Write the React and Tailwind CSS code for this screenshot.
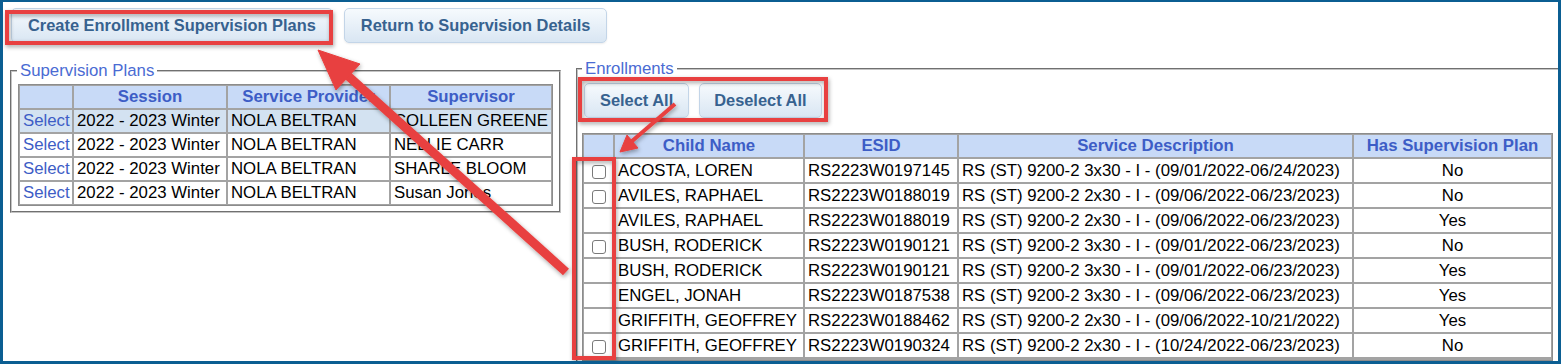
import React from "react";

const font = { fontFamily: '"Liberation Sans", Arial, sans-serif' };

const plans = [
  { session: "2022 - 2023 Winter", provider: "NOLA BELTRAN", supervisor: "COLLEEN GREENE", selected: true },
  { session: "2022 - 2023 Winter", provider: "NOLA BELTRAN", supervisor: "NELLIE CARR" },
  { session: "2022 - 2023 Winter", provider: "NOLA BELTRAN", supervisor: "SHARLE BLOOM" },
  { session: "2022 - 2023 Winter", provider: "NOLA BELTRAN", supervisor: "Susan Jones" },
];

const enrollments = [
  { name: "ACOSTA, LOREN", esid: "RS2223W0197145", desc: "RS (ST) 9200-2 3x30 - I - (09/01/2022-06/24/2023)", has: "No" },
  { name: "AVILES, RAPHAEL", esid: "RS2223W0188019", desc: "RS (ST) 9200-2 2x30 - I - (09/06/2022-06/23/2023)", has: "No" },
  { name: "AVILES, RAPHAEL", esid: "RS2223W0188019", desc: "RS (ST) 9200-2 2x30 - I - (09/06/2022-06/23/2023)", has: "Yes" },
  { name: "BUSH, RODERICK", esid: "RS2223W0190121", desc: "RS (ST) 9200-2 3x30 - I - (09/01/2022-06/23/2023)", has: "No" },
  { name: "BUSH, RODERICK", esid: "RS2223W0190121", desc: "RS (ST) 9200-2 3x30 - I - (09/01/2022-06/23/2023)", has: "Yes" },
  { name: "ENGEL, JONAH", esid: "RS2223W0187538", desc: "RS (ST) 9200-2 3x30 - I - (09/06/2022-06/23/2023)", has: "Yes" },
  { name: "GRIFFITH, GEOFFREY", esid: "RS2223W0188462", desc: "RS (ST) 9200-2 2x30 - I - (09/06/2022-10/21/2022)", has: "Yes" },
  { name: "GRIFFITH, GEOFFREY", esid: "RS2223W0190324", desc: "RS (ST) 9200-2 2x30 - I - (10/24/2022-06/23/2023)", has: "No" },
];

const btn =
  "h-[35px] rounded-[5px] border border-[#c3d5e8] bg-linear-to-b from-[#f6fafd] to-[#d9e6f3] text-[16.4px] font-bold text-[#37628f] shadow-[0_1px_2px_rgba(0,0,0,0.08)]";

const th = "border border-[#a3a3a3] bg-[#c8daf7] px-[3px] leading-[22px] text-center font-bold text-[#3d5dc6]";
const td = "border border-[#a3a3a3] px-[3px] whitespace-nowrap";

function Checkbox() {
  return <span className="inline-block h-[14px] w-[14px] rounded-[3px] border border-[#7a7a7a] bg-white align-middle" />;
}

// red callouts laid over the page, in page pixels
function Annotations() {
  return (
    <svg
      className="pointer-events-none absolute -left-[3px] -top-[2px] h-[364px] w-[1561px]"
      viewBox="0 0 1561 364"
    >
      <defs>
        <filter id="sh" x="-20%" y="-20%" width="140%" height="140%">
          <feDropShadow dx="1" dy="2" stdDeviation="2" floodColor="#000" floodOpacity="0.35" />
        </filter>
      </defs>
      <g filter="url(#sh)" fill="none" stroke="#e8403f" strokeWidth="4">
        <rect x="7" y="12" width="324" height="31" />
        <rect x="580" y="79" width="246" height="41" />
        <rect x="574" y="159" width="40" height="199" />
      </g>
      <g filter="url(#sh)" fill="#e8403f" stroke="#e8403f">
        <line x1="566" y1="272" x2="347" y2="75" strokeWidth="9" />
        <polygon points="318,50 360,64 336,90" strokeWidth="1" />
        <line x1="675" y1="104" x2="631" y2="142" strokeWidth="4" />
        <polygon points="620,152 638,148 627,135" strokeWidth="1" />
      </g>
    </svg>
  );
}

export default function App() {
  return (
    <div
      style={font}
      className="relative box-border h-[364px] w-[1561px] overflow-hidden border-x-[3px] border-t-2 border-b-[3px] border-[#0b5e92] bg-white text-[16.8px] text-black"
    >
      <div className="flex gap-[11px] pl-[8px] pt-[6px]">
        <button className={btn + " px-[16px]"}>Create Enrollment Supervision Plans</button>
        <button className={btn + " px-[16px]"}>Return to Supervision Details</button>
      </div>

      <div className="mt-[16px] flex items-start gap-[15px] pl-[7px]">
        <fieldset className="mt-[2px] w-[551px] shrink-0 border-2 border-[#c4c4c4] px-[5px] pb-[5px] pt-[3px] [border-style:groove]">
          <legend className="px-[3px] leading-[20px] text-[#4a6bd3]">Supervision Plans</legend>
          <table className="ml-[1px] w-[535px] table-fixed border-separate border-spacing-0 border border-[#8c8c8c]">
            <thead>
              <tr>
                <th className={th + " w-[54px]"}></th>
                <th className={th + " w-[154px]"}>Session</th>
                <th className={th + " w-[163px]"}>Service Provider</th>
                <th className={th}>Supervisor</th>
              </tr>
            </thead>
            <tbody>
              {plans.map((p, i) => (
                <tr key={i} className={"leading-[22px] " + (p.selected ? "bg-[#d3e2f1]" : "")}>
                  <td className={td + " text-[#3d5dc6]"}>Select</td>
                  <td className={td}>{p.session}</td>
                  <td className={td}>{p.provider}</td>
                  <td className={td}>{p.supervisor}</td>
                </tr>
              ))}
            </tbody>
          </table>
        </fieldset>

        <fieldset className="w-[1000px] shrink-0 border-2 border-[#c4c4c4] px-[4px] pt-[4px] [border-style:groove]">
          <legend className="px-[3px] leading-[20px] text-[#4a6bd3]">Enrollments</legend>
          <div className="ml-[2px] flex gap-[10px]">
            <button className={btn + " px-[15px]"}>Select All</button>
            <button className={btn + " px-[14px]"}>Deselect All</button>
          </div>
          <table className="mt-[15px] w-[971px] table-fixed border-separate border-spacing-0 border border-[#8c8c8c]">
            <thead>
              <tr>
                <th className={th + " w-[31px]"}></th>
                <th className={th + " w-[190px]"}>Child Name</th>
                <th className={th + " w-[154px]"}>ESID</th>
                <th className={th + " w-[395px]"}>Service Description</th>
                <th className={th}>Has Supervision Plan</th>
              </tr>
            </thead>
            <tbody>
              {enrollments.map((e, i) => (
                <tr key={i} className="leading-[23px]">
                  <td className={td + " text-center"}>{e.has === "No" ? <Checkbox /> : null}</td>
                  <td className={td}>{e.name}</td>
                  <td className={td}>{e.esid}</td>
                  <td className={td}>{e.desc}</td>
                  <td className={td + " text-center"}>{e.has}</td>
                </tr>
              ))}
              <tr className="leading-[23px]">
                <td className={td}></td>
                <td className={td}></td>
                <td className={td}></td>
                <td className={td}></td>
                <td className={td}></td>
              </tr>
            </tbody>
          </table>
        </fieldset>
      </div>

      <Annotations />
    </div>
  );
}
